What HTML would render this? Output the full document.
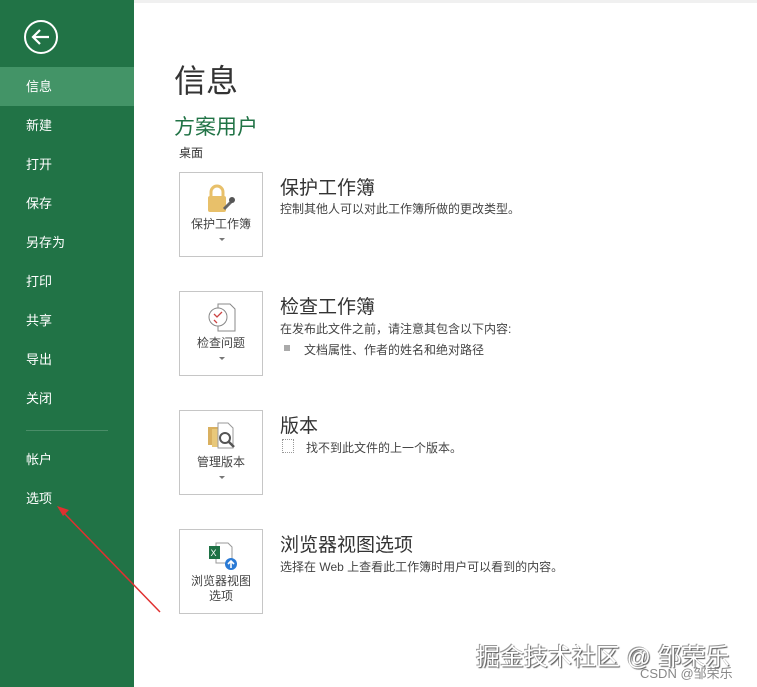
<!DOCTYPE html>
<html><head><meta charset="utf-8"><style>
*{margin:0;padding:0;box-sizing:border-box}
body{width:757px;height:687px;background:#fff;position:relative;overflow:hidden;font-family:"Liberation Sans","Noto Sans CJK SC",sans-serif;color:#444}
.side{position:absolute;left:0;top:0;width:134px;height:687px;background:#217346}
.mi{position:absolute;left:0;width:134px;height:39px;line-height:39px;padding-left:26px;color:#fff;font-size:13px}
.sel{background:#439467}
.t{position:absolute;white-space:nowrap}
.box{position:absolute;left:179px;width:84px;height:85px;border:1px solid #c6c6c6;text-align:center;font-size:12px;color:#444}
.box .lb{position:absolute;left:0;right:0;top:44px;line-height:15px}
.box .ar{position:absolute;left:39px;top:65px;width:0;height:0;border-left:3px solid transparent;border-right:3px solid transparent;border-top:3px solid #777}
.h{font-size:19px;color:#333}
.d{font-size:12px;color:#444}
</style></head><body>
<div style="position:absolute;left:134px;top:0;width:623px;height:3px;background:#f0f0f0"></div>
<div class="side">
<svg style="position:absolute;left:23px;top:19px" width="36" height="36" viewBox="0 0 36 36"><circle cx="18" cy="18" r="16" fill="none" stroke="#fff" stroke-width="2"/><path d="M10 18H26M17 11L10 18L17 25" fill="none" stroke="#fff" stroke-width="2.2"/></svg>
<div class="mi sel" style="top:67px">信息</div>
<div class="mi" style="top:106px">新建</div>
<div class="mi" style="top:145px">打开</div>
<div class="mi" style="top:184px">保存</div>
<div class="mi" style="top:223px">另存为</div>
<div class="mi" style="top:262px">打印</div>
<div class="mi" style="top:301px">共享</div>
<div class="mi" style="top:340px">导出</div>
<div class="mi" style="top:379px">关闭</div>
<div style="position:absolute;left:26px;top:430px;width:82px;height:1px;background:#4a8d68"></div>
<div class="mi" style="top:440px">帐户</div>
<div class="mi" style="top:479px">选项</div>
</div>
<div class="t" style="left:174px;top:56px;font-size:32px;color:#333">信息</div>
<div class="t" style="left:174px;top:111px;font-size:21px;color:#217346">方案用户</div>
<div class="t" style="left:179px;top:144px;font-size:12px;color:#333">桌面</div>

<div class="box" style="top:172px">
<svg style="position:absolute;left:26px;top:10px" width="32" height="32"><rect x="2" y="13" width="18" height="16" rx="2" fill="#e8c06a"/><path d="M5 13V9a6 6 0 0 1 12 0v4" fill="none" stroke="#e8c06a" stroke-width="3"/><path d="M18 26l8-8" stroke="#666" stroke-width="3"/><circle cx="26" cy="17" r="3" fill="#555"/></svg>
<div class="lb">保护工作簿</div><div class="ar"></div></div>
<div class="t h" style="left:280px;top:173px">保护工作簿</div>
<div class="t d" style="left:280px;top:200px">控制其他人可以对此工作簿所做的更改类型。</div>

<div class="box" style="top:291px">
<svg style="position:absolute;left:26px;top:10px" width="32" height="32"><path d="M12 2h12l5 5v22H12z" fill="#fff" stroke="#888"/><circle cx="12" cy="15" r="9" fill="#fff" stroke="#888"/><path d="M8 12l3 3 5-5M8 18l3 3" stroke="#c44" fill="none" stroke-width="1.3"/></svg>
<div class="lb">检查问题</div><div class="ar"></div></div>
<div class="t h" style="left:280px;top:292px">检查工作簿</div>
<div class="t d" style="left:280px;top:320px">在发布此文件之前，请注意其包含以下内容:</div>
<div style="position:absolute;left:284px;top:345px;width:6px;height:6px;background:#aaa"></div>
<div class="t d" style="left:304px;top:341px">文档属性、作者的姓名和绝对路径</div>

<div class="box" style="top:410px">
<svg style="position:absolute;left:26px;top:10px" width="32" height="32"><rect x="2" y="6" width="14" height="18" fill="#d9b060"/><rect x="6" y="8" width="14" height="18" fill="#e8c87a"/><path d="M12 2h10l5 5v20H12z" fill="#fff" stroke="#999"/><circle cx="19" cy="17" r="5" fill="#fff" stroke="#555" stroke-width="2"/><path d="M23 21l5 5" stroke="#555" stroke-width="2.5"/></svg>
<div class="lb">管理版本</div><div class="ar"></div></div>
<div class="t h" style="left:280px;top:411px">版本</div>
<div style="position:absolute;left:282px;top:439px;width:12px;height:14px;border:1px dotted #999"></div>
<div class="t d" style="left:306px;top:439px">找不到此文件的上一个版本。</div>

<div class="box" style="top:529px">
<svg style="position:absolute;left:26px;top:10px" width="32" height="32"><path d="M10 3h12l4 4v16H10z" fill="#fff" stroke="#999"/><rect x="3" y="6" width="11" height="13" fill="#1e7145"/><text x="4.5" y="16" font-size="9" fill="#fff" font-family="Liberation Sans">X</text><circle cx="25" cy="24" r="6" fill="#2a7ad5"/><path d="M25 28v-7M22 24l3-3 3 3" stroke="#fff" stroke-width="1.6" fill="none"/></svg>
<div class="lb">浏览器视图<br>选项</div></div>
<div class="t h" style="left:280px;top:530px">浏览器视图选项</div>
<div class="t d" style="left:280px;top:558px">选择在 Web 上查看此工作簿时用户可以看到的内容。</div>

<svg style="position:absolute;left:0;top:0" width="757" height="687"><path d="M160 612L64 513" stroke="#e03030" stroke-width="1.5"/><path d="M57 506l12 4-6 6z" fill="#e03030"/></svg>
<div class="t" style="left:476px;top:637px;font-size:24px;color:#fff;text-shadow:1px 1px 1px #555,-1px -1px 0 #999">掘金技术社区 @ 邹荣乐</div>
<div class="t" style="left:640px;top:663px;font-size:13px;color:#888">CSDN @邹荣乐</div>
</body></html>
